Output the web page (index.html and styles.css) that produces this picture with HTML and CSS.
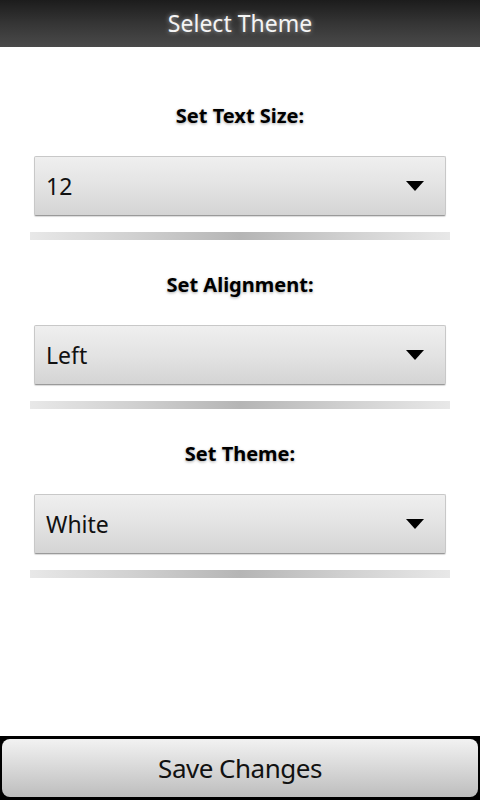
FILE: index.html
```html
<!DOCTYPE html>
<html>
<head>
<meta charset="utf-8">
<link rel="stylesheet" href="styles.css">
</head>
<body>
<div class="screen">
  <header class="titlebar">Select Theme</header>
  <main class="content">
    <section class="group">
      <div class="label">Set Text Size:</div>
      <div class="spinner"><span class="value">12</span><span class="arrow"></span></div>
      <div class="divider"></div>
    </section>
    <section class="group">
      <div class="label">Set Alignment:</div>
      <div class="spinner"><span class="value">Left</span><span class="arrow"></span></div>
      <div class="divider"></div>
    </section>
    <section class="group">
      <div class="label">Set Theme:</div>
      <div class="spinner"><span class="value">White</span><span class="arrow"></span></div>
      <div class="divider"></div>
    </section>
  </main>
  <footer class="footer">
    <div class="save">Save Changes</div>
  </footer>
</div>
</body>
</html>
```
FILE: styles.css
```css
html, body {
  margin: 0;
  padding: 0;
  background: #ffffff;
}
.screen {
  width: 480px;
  height: 800px;
  display: flex;
  flex-direction: column;
  font-family: "Noto Sans", "Open Sans", "DejaVu Sans", sans-serif;
}
.titlebar {
  height: 47px;
  flex: 0 0 47px;
  background: linear-gradient(#1c1c1c, #353535 50%, #4a4a4a);
  color: #f4f4f4;
  font-size: 23px;
  line-height: 47px;
  text-align: center;
  text-shadow: 0 0 5px rgba(255,255,255,0.6);
}
.content {
  flex: 1;
  padding-top: 55px;
  display: flex;
  flex-direction: column;
}
.group {
  display: flex;
  flex-direction: column;
  align-items: center;
  margin-bottom: 31px;
}
.label {
  font-weight: bold;
  font-size: 20px;
  line-height: 28px;
  color: #000;
  text-shadow: 0 1px 3px rgba(0,0,0,0.35);
}
.spinner {
  margin-top: 26px;
  height: 58px;
  width: 378px;
  box-sizing: content-box;
  border: 1px solid #c8c8c8;
  border-bottom-color: #9a9a9a;
  border-radius: 2px;
  background: linear-gradient(#efefef, #e3e3e3 50%, #d4d4d4);
  box-shadow: 0 1px 1px rgba(0,0,0,0.15);
  display: flex;
  align-items: center;
  justify-content: space-between;
  padding: 0 21px 0 11px;
}
.value {
  font-size: 23px;
  color: #111;
}
.arrow {
  width: 0;
  height: 0;
  border-left: 9px solid transparent;
  border-right: 9px solid transparent;
  border-top: 10px solid #000;
}
.divider {
  margin-top: 16px;
  width: 420px;
  height: 8px;
  background: linear-gradient(90deg, #e8e8e8, #d0d0d0 25%, #b5b5b5 50%, #d0d0d0 75%, #e8e8e8);
}
.footer {
  flex: 0 0 64px;
  height: 64px;
  background: #000;
  padding: 3px 2px;
  box-sizing: border-box;
}
.save {
  height: 100%;
  border-radius: 8px;
  background: linear-gradient(#f2f2f2, #d8d8d8 50%, #bdbdbd);
  display: flex;
  align-items: center;
  justify-content: center;
  font-size: 26px;
  letter-spacing: -0.5px;
  color: #111;
}
```
